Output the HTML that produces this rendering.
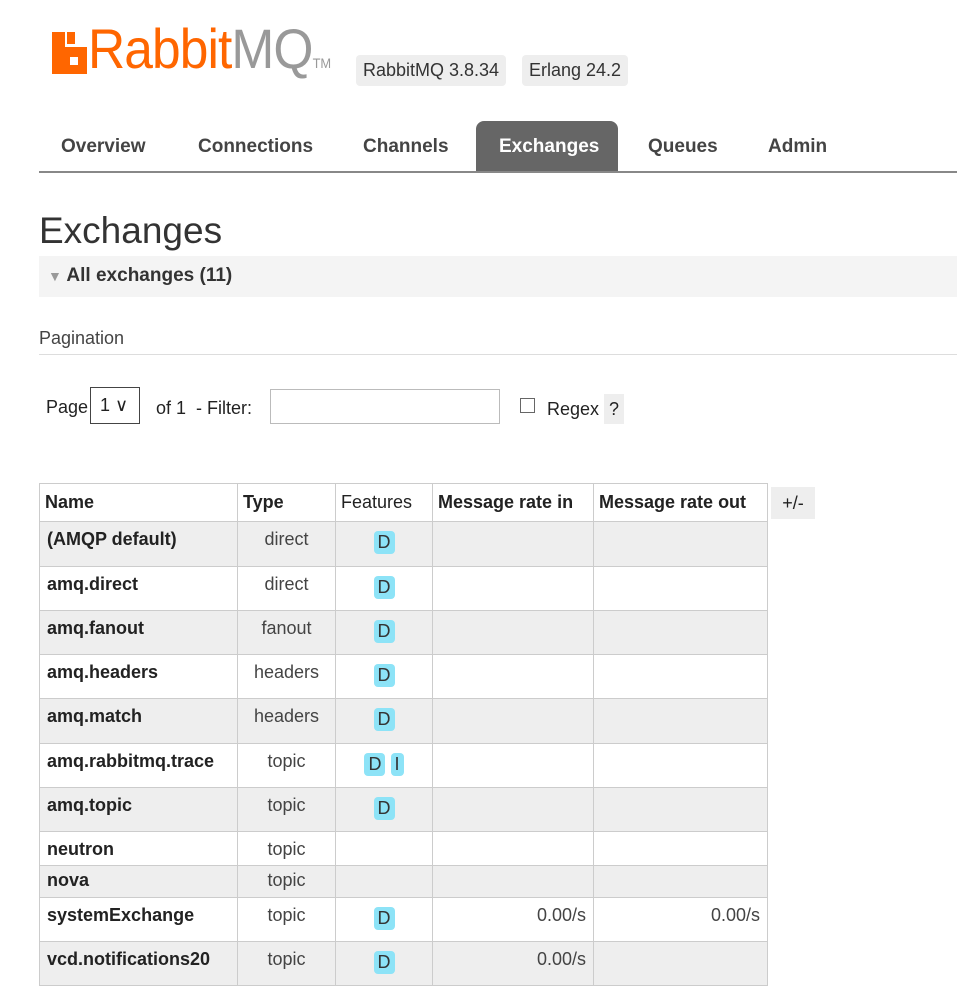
<!DOCTYPE html>
<html><head><meta charset="utf-8"><style>
body{margin:0;width:957px;height:995px;background:#fff;font-family:"Liberation Sans Narrow","Liberation Sans",sans-serif;color:#222;position:relative;overflow:hidden}
.a{position:absolute}
.logo{font-size:56px;letter-spacing:-1px;font-family:"Liberation Sans",sans-serif;transform:scaleX(0.92);transform-origin:left top}
.badge{background:#eee;border-radius:4px;font-size:18px;padding:5px 7px;color:#333}
.nav{font-size:19px;font-weight:bold;color:#444;top:136px}
table{position:absolute;left:39px;top:483px;border-collapse:collapse;font-size:18px;table-layout:fixed;width:729px}
td,th{border:1px solid #ccc;padding:0 7px;vertical-align:top;white-space:nowrap;overflow:hidden}
th{text-align:left;height:37px;vertical-align:middle;padding:0 5px}
td{padding-top:7px}
tr.g td{background:#eee}
.n{font-weight:bold}
.t{text-align:center;color:#444}
.f{text-align:center}
.r{text-align:right;color:#444}
.d{display:inline-block;background:#8de3f7;border-radius:4px;padding:1px 4px;color:#333;margin-top:2px}
</style></head><body>
<div class="a" style="left:52px;top:32px;width:13px;height:42px;background:#f60"></div>
<div class="a" style="left:65px;top:47px;width:22px;height:27px;background:#f60"></div>
<div class="a" style="left:70px;top:57px;width:8px;height:8px;background:#fff"></div>
<div class="a" style="left:67px;top:32px;width:8px;height:12px;background:#f60"></div>
<div class="a logo" style="left:88px;top:16px"><span style="color:#f60">Rabbit</span><span style="color:#999">MQ</span><span style="font-size:14px;color:#999;letter-spacing:0">TM</span></div>
<div class="a badge" style="left:356px;top:55px">RabbitMQ 3.8.34</div>
<div class="a badge" style="left:522px;top:55px">Erlang 24.2</div>
<div class="a" style="left:476px;top:121px;width:142px;height:52px;background:#666;border-radius:8px 8px 0 0"></div>
<div class="a nav" style="left:61px">Overview</div>
<div class="a nav" style="left:198px">Connections</div>
<div class="a nav" style="left:363px">Channels</div>
<div class="a nav" style="left:499px;color:#fff">Exchanges</div>
<div class="a nav" style="left:648px">Queues</div>
<div class="a nav" style="left:768px">Admin</div>
<div class="a" style="left:39px;top:171px;width:918px;height:2px;background:#888"></div>
<div class="a" style="left:39px;top:210px;font-size:37px;color:#333">Exchanges</div>
<div class="a" style="left:39px;top:256px;width:918px;height:41px;background:#f4f4f4"></div>
<div class="a" style="left:48px;top:265px;font-size:19px;font-weight:bold;color:#333"><span style="color:#999;font-size:14px">▼</span> All exchanges (11)</div>
<div class="a" style="left:39px;top:328px;font-size:18px;color:#444">Pagination</div>
<div class="a" style="left:39px;top:354px;width:918px;height:1px;background:#ddd"></div>
<div class="a" style="left:46px;top:397px;font-size:18px">Page</div>
<div class="a" style="left:90px;top:387px;width:50px;height:37px;border:1px solid #444;box-sizing:border-box;font-size:18px;padding:7px 0 0 9px">1 ∨</div>
<div class="a" style="left:156px;top:398px;font-size:18px">of 1 &nbsp;- Filter:</div>
<div class="a" style="left:270px;top:389px;width:230px;height:35px;border:1px solid #bbb;box-sizing:border-box"></div>
<div class="a" style="left:520px;top:398px;width:15px;height:15px;border:1px solid #666;box-sizing:border-box"></div>
<div class="a" style="left:547px;top:399px;font-size:18px">Regex</div>
<div class="a" style="left:604px;top:394px;width:20px;height:30px;background:#eee;font-size:18px;text-align:center;line-height:30px">?</div>
<div class="a" style="left:771px;top:487px;width:44px;height:32px;background:#eee;font-size:18px;text-align:center;line-height:32px">+/-</div>
<table>
<colgroup><col style="width:198px"><col style="width:98px"><col style="width:97px"><col style="width:161px"><col style="width:174px"></colgroup>
<tr><th>Name</th><th>Type</th><th style="font-weight:normal">Features</th><th>Message rate in</th><th>Message rate out</th></tr>
<tr class="g" style="height:45px"><td class="n">(AMQP default)</td><td class="t">direct</td><td class="f"><span class="d">D</span></td><td></td><td></td></tr>
<tr style="height:44px"><td class="n">amq.direct</td><td class="t">direct</td><td class="f"><span class="d">D</span></td><td></td><td></td></tr>
<tr class="g" style="height:44px"><td class="n">amq.fanout</td><td class="t">fanout</td><td class="f"><span class="d">D</span></td><td></td><td></td></tr>
<tr style="height:44px"><td class="n">amq.headers</td><td class="t">headers</td><td class="f"><span class="d">D</span></td><td></td><td></td></tr>
<tr class="g" style="height:45px"><td class="n">amq.match</td><td class="t">headers</td><td class="f"><span class="d">D</span></td><td></td><td></td></tr>
<tr style="height:44px"><td class="n">amq.rabbitmq.trace</td><td class="t">topic</td><td class="f"><span class="d">D</span> <span class="d">I</span></td><td></td><td></td></tr>
<tr class="g" style="height:44px"><td class="n">amq.topic</td><td class="t">topic</td><td class="f"><span class="d">D</span></td><td></td><td></td></tr>
<tr style="height:34px"><td class="n">neutron</td><td class="t">topic</td><td></td><td></td><td></td></tr>
<tr class="g" style="height:32px"><td class="n" style="padding-top:4px">nova</td><td class="t" style="padding-top:4px">topic</td><td></td><td></td><td></td></tr>
<tr style="height:44px"><td class="n">systemExchange</td><td class="t">topic</td><td class="f"><span class="d">D</span></td><td class="r">0.00/s</td><td class="r">0.00/s</td></tr>
<tr class="g" style="height:44px"><td class="n">vcd.notifications20</td><td class="t">topic</td><td class="f"><span class="d">D</span></td><td class="r">0.00/s</td><td></td></tr>
</table>
</body></html>
